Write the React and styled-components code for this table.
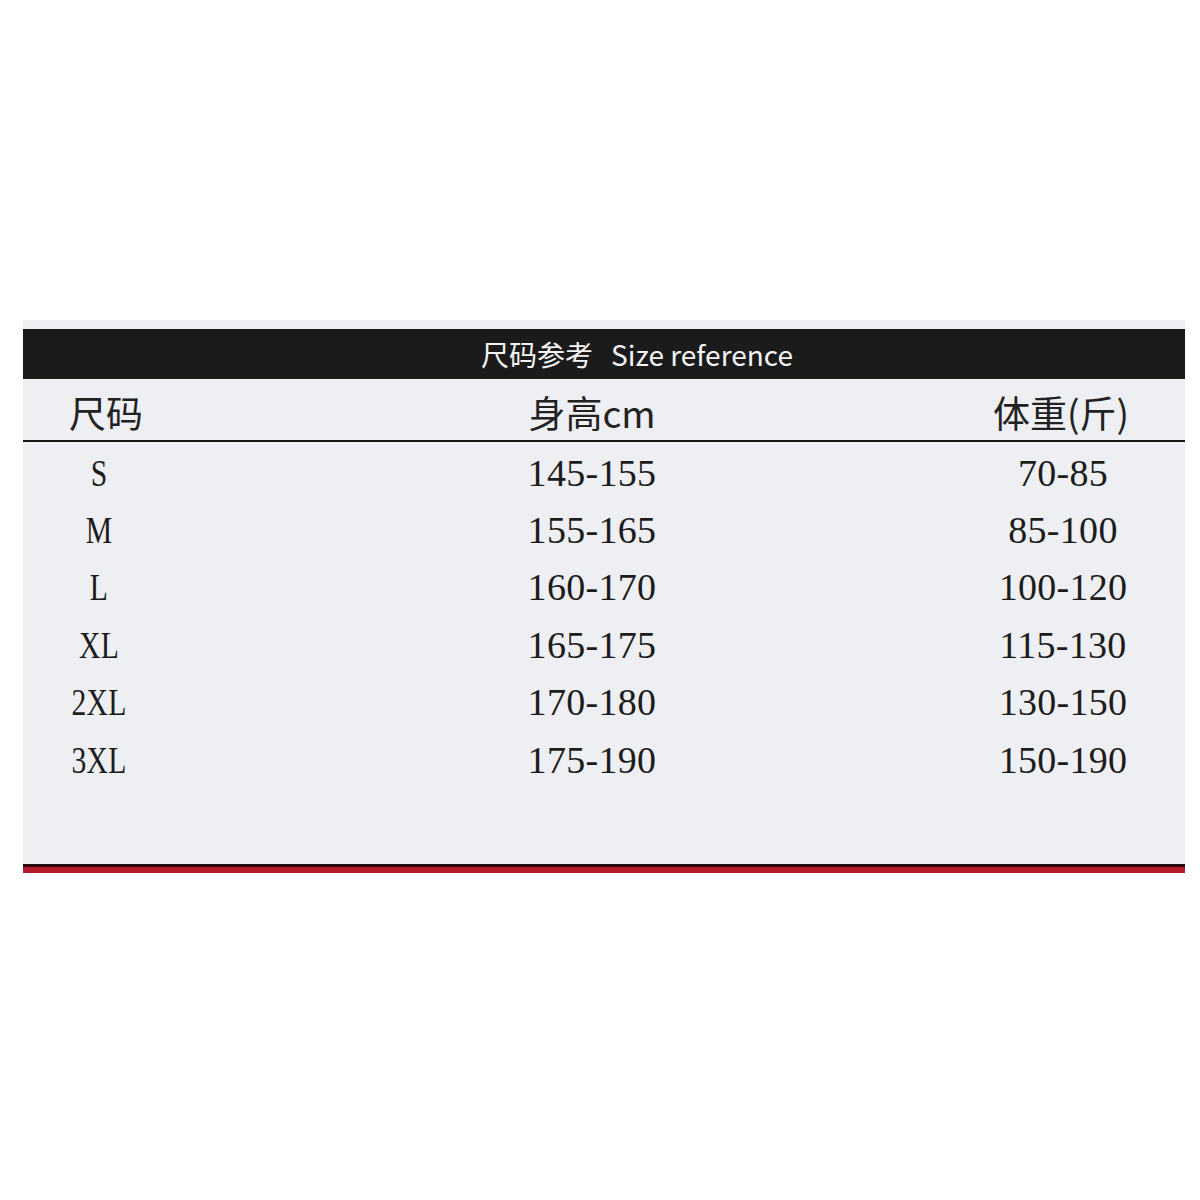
import React from "react";
import styled, { createGlobalStyle } from "styled-components";

const GlobalStyle = createGlobalStyle`
  body {
    margin: 0;
    background: #ffffff;
    font-family: "Noto Sans", "Noto Sans CJK SC", sans-serif;
  }
`;

const Page = styled.div`
  padding: 320px 15px 0 23px;
`;

const Panel = styled.div`
  width: 1162px;
  background: #eeeff2;
  padding-top: 9px;
`;

const TitleBar = styled.div`
  height: 50px;
  background: #1b1b1b;
  color: #f4f4f4;
  display: flex;
  align-items: center;
  justify-content: center;
  padding-left: 66px;
  font-family: "Noto Sans CJK SC", sans-serif;
  font-size: 28px;
  gap: 18px;
`;

const Grid = styled.div`
  display: grid;
  grid-template-columns: 152px 834px 108px;
`;

const HeadRow = styled(Grid)`
  height: 61px;
  border-bottom: 2px solid #161616;
  align-items: center;
`;

const HeadCell = styled.div`
  display: flex;
  justify-content: center;
  font-family: "Noto Sans CJK SC", sans-serif;
  font-size: 37px;
  color: #222;
  padding-top: 4px;
  white-space: nowrap;
  transform: translateX(${(p) => p.shift || 0}px);
`;

const Body = styled.div`
  padding-top: 2px;
  height: 420px;
`;

const Row = styled(Grid)`
  height: 57.4px;
  align-items: center;
`;

const Cell = styled.div`
  display: flex;
  justify-content: center;
  white-space: nowrap;
  font-family: "Liberation Serif", "Noto Serif CJK SC", serif;
  font-size: 38px;
  color: #1c1c1c;
  letter-spacing: 0.3px;
  transform: scaleX(${(p) => (p.condensed ? 0.78 : 1)});
`;

const BottomBar = styled.div`
  height: 6px;
  border-top: 3px solid #2a0a0e;
  background: #b3182b;
`;

const rows = [
  ["S", "145-155", "70-85"],
  ["M", "155-165", "85-100"],
  ["L", "160-170", "100-120"],
  ["XL", "165-175", "115-130"],
  ["2XL", "170-180", "130-150"],
  ["3XL", "175-190", "150-190"],
];

export default function App() {
  return (
    <Page>
      <GlobalStyle />
      <Panel>
        <TitleBar>
          <span>尺码参考</span>
          <span>Size reference</span>
        </TitleBar>
        <HeadRow>
          <HeadCell shift={7}>尺码</HeadCell>
          <HeadCell>身高cm</HeadCell>
          <HeadCell shift={-2}>体重(斤)</HeadCell>
        </HeadRow>
        <Body>
          {rows.map((r) => (
            <Row key={r[0]}>
              <Cell condensed>{r[0]}</Cell>
              <Cell>{r[1]}</Cell>
              <Cell>{r[2]}</Cell>
            </Row>
          ))}
        </Body>
        <BottomBar />
      </Panel>
    </Page>
  );
}
